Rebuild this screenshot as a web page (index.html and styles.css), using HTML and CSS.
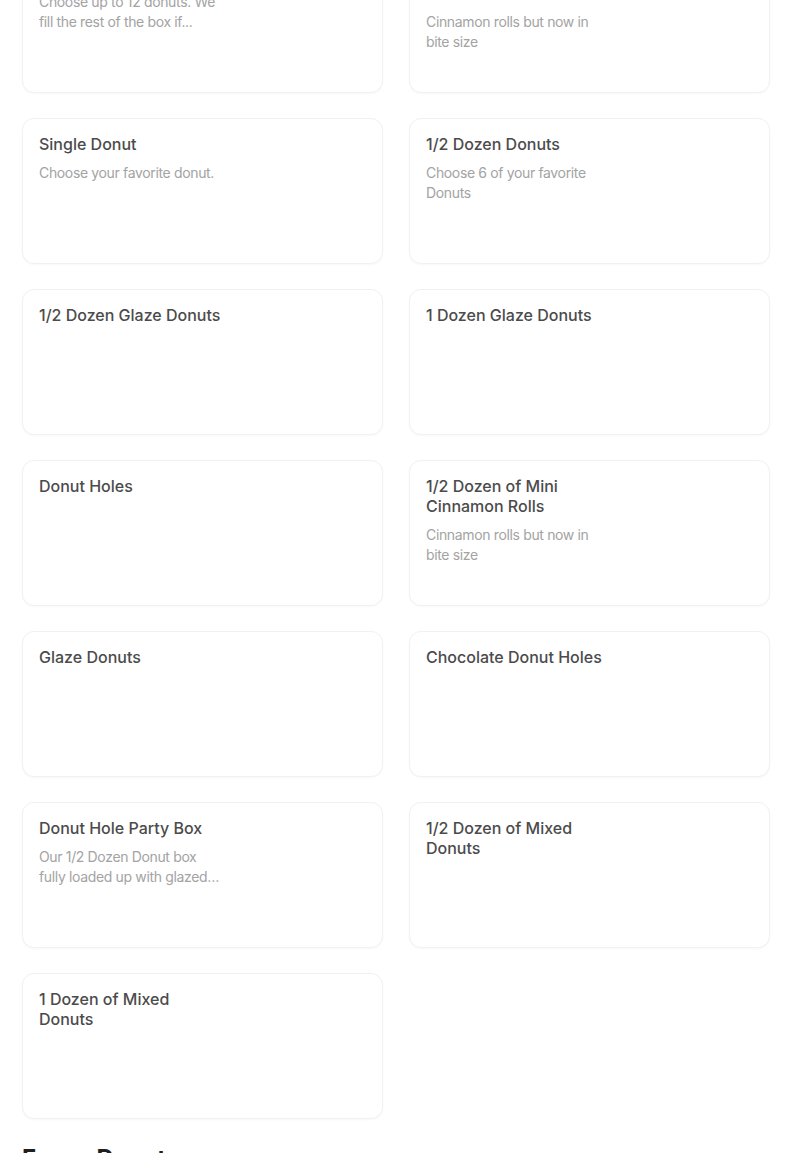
FILE: index.html
```html
<!DOCTYPE html>
<html lang="en">
<head>
  <meta charset="UTF-8">
  <title>Donuts Menu</title>
  <link rel="stylesheet" href="styles.css">
</head>
<body>
  <main class="menu">
    <section class="menu-section">
      <ul class="item-grid">
        <li class="item-card">
          <div class="item-text">
            <h3 class="item-title">1 Dozen Donuts</h3>
            <p class="item-desc">Choose up to 12 donuts. We fill the rest of the box if...</p>
          </div>
        </li>
        <li class="item-card">
          <div class="item-text">
            <h3 class="item-title">1 Dozen of Mini Cinnamon Rolls</h3>
            <p class="item-desc">Cinnamon rolls but now in bite size</p>
          </div>
        </li>
        <li class="item-card">
          <div class="item-text">
            <h3 class="item-title">Single Donut</h3>
            <p class="item-desc">Choose your favorite donut.</p>
          </div>
        </li>
        <li class="item-card">
          <div class="item-text">
            <h3 class="item-title">1/2 Dozen Donuts</h3>
            <p class="item-desc">Choose 6 of your favorite Donuts</p>
          </div>
        </li>
        <li class="item-card">
          <div class="item-text">
            <h3 class="item-title">1/2 Dozen Glaze Donuts</h3>
          </div>
        </li>
        <li class="item-card">
          <div class="item-text">
            <h3 class="item-title">1 Dozen Glaze Donuts</h3>
          </div>
        </li>
        <li class="item-card">
          <div class="item-text">
            <h3 class="item-title">Donut Holes</h3>
          </div>
        </li>
        <li class="item-card">
          <div class="item-text">
            <h3 class="item-title">1/2 Dozen of Mini Cinnamon Rolls</h3>
            <p class="item-desc">Cinnamon rolls but now in bite size</p>
          </div>
        </li>
        <li class="item-card">
          <div class="item-text">
            <h3 class="item-title">Glaze Donuts</h3>
          </div>
        </li>
        <li class="item-card">
          <div class="item-text">
            <h3 class="item-title">Chocolate Donut Holes</h3>
          </div>
        </li>
        <li class="item-card">
          <div class="item-text">
            <h3 class="item-title">Donut Hole Party Box</h3>
            <p class="item-desc">Our 1/2 Dozen Donut box fully loaded up with glazed donut holes.</p>
          </div>
        </li>
        <li class="item-card">
          <div class="item-text">
            <h3 class="item-title">1/2 Dozen of Mixed Donuts</h3>
          </div>
        </li>
        <li class="item-card">
          <div class="item-text">
            <h3 class="item-title">1 Dozen of Mixed Donuts</h3>
          </div>
        </li>
      </ul>
    </section>

    <section class="menu-section">
      <h2 class="section-title">Fancy Donuts</h2>
    </section>
  </main>
</body>
</html>
```

FILE: styles.css
```css
body {
  margin: 0;
  background: #fff;
  font-family: Inter, 'Liberation Sans', sans-serif;
  color: #262626;
  overflow: hidden;
}

.menu {
  width: 748px;
  padding: 0 22px;
  /* page is scrolled part way into the list */
  margin-top: -53px;
}

.item-grid {
  list-style: none;
  margin: 0;
  padding: 0;
  display: grid;
  grid-template-columns: repeat(2, 361px);
  column-gap: 26px;
  row-gap: 25px;
}

.item-card {
  height: 146px;
  box-sizing: border-box;
  padding: 15px 16px;
  border: 1px solid #f1f1f1;
  border-radius: 12px;
  background: #fff;
  box-shadow: 0 1px 2px rgba(0, 0, 0, 0.03);
}

.item-text {
  max-width: 184px;
}

.item-title {
  margin: 0;
  font-size: 16px;
  line-height: 20px;
  font-weight: 500;
  color: #4b4b4b;
}

.item-desc {
  margin: 9px 0 0;
  font-size: 14px;
  line-height: 20px;
  letter-spacing: -0.35px;
  color: #a3a3a3;
  display: -webkit-box;
  -webkit-line-clamp: 2;
  -webkit-box-orient: vertical;
  overflow: hidden;
}

.section-title {
  margin: 24px 0 0;
  font-size: 24px;
  line-height: 32px;
  font-weight: 700;
  letter-spacing: -0.3px;
  color: #1f1f1f;
}
```
